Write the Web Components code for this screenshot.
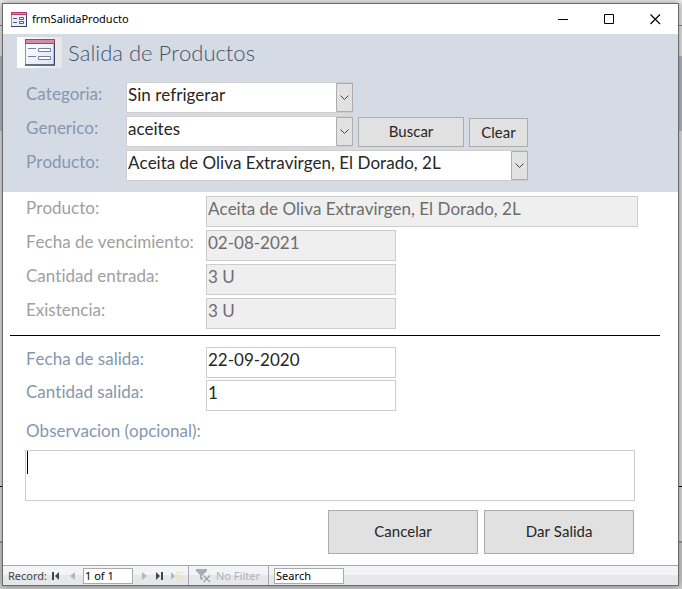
<!DOCTYPE html>
<html lang="es">
<head>
<meta charset="utf-8">
<title>frmSalidaProducto</title>
<style>
html{height:100%}
body{margin:0;min-height:100%;box-sizing:border-box;padding:3px 3px 3px 2px;display:flex;font-family:Lato,"Open Sans",sans-serif;font-variant-ligatures:none;font-kerning:none;
background:linear-gradient(#ededed 0 3px,#e4e4e4 3px 25px,#858585 25px 26px,#e4e4e4 26px 56px,#b0b8c2 56px 131px,#dedede 131px 486px,#000 486px 487px,#dedede 487px 541px,#9b9b9b 541px 543px,#cdcdcd 543px)}
access-window{flex:1}
</style>
</head>
<body>
<access-window caption="frmSalidaProducto">
  <form-header slot="content" heading="Salida de Productos">
    <combo-field label="Categoria:" value="Sin refrigerar"></combo-field>
    <combo-field label="Generico:" value="aceites">
      <push-button style="--w:106px">Buscar</push-button>
      <push-button style="--w:59px;--h:29px">Clear</push-button>
    </combo-field>
    <combo-field label="Producto:" value="Aceita de Oliva Extravirgen, El Dorado, 2L" style="--combo:402px"></combo-field>
  </form-header>
  <form-detail slot="content">
    <text-field slot="current" label="Producto:" value="Aceita de Oliva Extravirgen, El Dorado, 2L" disabled style="--field:432px"></text-field>
    <text-field slot="current" label="Fecha de vencimiento:" value="02-08-2021" disabled></text-field>
    <text-field slot="current" label="Cantidad entrada:" value="3 U" disabled></text-field>
    <text-field slot="current" label="Existencia:" value="3 U" disabled></text-field>
    <text-field slot="exit" label="Fecha de salida:" value="22-09-2020"></text-field>
    <text-field slot="exit" label="Cantidad salida:" value="1"></text-field>
    <note-field slot="note" label="Observacion (opcional):"></note-field>
    <push-button slot="actions" style="--w:150px;--h:44px">Cancelar</push-button>
    <push-button slot="actions" style="--w:150px;--h:44px">Dar Salida</push-button>
  </form-detail>
  <record-bar slot="status"></record-bar>
</access-window>
<script>
function define(name, render) {
  customElements.define(name, class extends HTMLElement {
    connectedCallback() {
      if (this.shadowRoot) return;
      this.attachShadow({mode: 'open'}).innerHTML =
        '<style>*{box-sizing:border-box}button,input,select,textarea{font-kerning:none!important;font-variant-ligatures:none!important}</style>' + render(this);
    }
  });
}
const at = (el, n) => el.getAttribute(n) || '';

define('form-icon', () => `
<style>:host{display:block;width:30px;height:27px}svg{display:block;width:100%;height:100%}</style>
<svg viewBox="0 0 30 27" aria-hidden="true"><defs><linearGradient id="g" x2="1" y2="1"><stop stop-color="#fff"/><stop offset="1" stop-color="#dce3f0"/></linearGradient></defs>
<path d="M0 4h30v22H0z" fill="url(#g)"/><path d="M.5 4v22" stroke="#8593ad"/><path d="M0 26h30M29.500 4v22" stroke="#344563" stroke-width="1.500"/>
<path d="M0 0h30v5H0z" fill="#b23b6b"/><path d="M1 1h28v3H1z" fill="#d58bac"/>
<path d="M3 9.500h8M3 17.500h8" stroke="#71809b"/><path d="M13.500 9.500h12v3h-12zM13.500 17.500h12v3h-12z" fill="#fff" stroke="#71809b"/></svg>`);

define('small-form-icon', () => `
<style>:host{display:block;width:16px;height:15px}svg{display:block}</style>
<svg width="16" height="15" aria-hidden="true"><path d="M0 0h16v15H0z" fill="#eaf0fa"/><path d="M.5 3v12" stroke="#8593ad"/><path d="M0 14.500h16M15.500 3v12" stroke="#344563"/>
<path d="M0 0h16v3H0z" fill="#b23b6b"/><path d="M1 1h14v1H1z" fill="#d58bac"/>
<path d="M2 6.500h4M2 10.500h4" stroke="#4d5f80"/><path d="M8.500 5.500h4v2h-4zM8.500 9.500h4v2h-4z" fill="#fff" stroke="#4d5f80"/></svg>`);

define('access-window', el => `
<style>
:host{display:flex;flex-direction:column;background:#fff;border:1px solid #6b6b6b;box-shadow:0 0 7px #0006;min-width:0}
header{display:flex;align-items:center;height:30px;padding-left:8px;font:11px/16px "Noto Sans",sans-serif;color:#000}
small-form-icon{margin-right:5px}
.caption{flex:1}
button{width:46px;height:30px;padding:0;border:0;background:none;display:grid;place-items:center}
main{flex:1;display:flex;flex-direction:column}
</style>
<header><small-form-icon></small-form-icon><span class="caption">${at(el, 'caption')}</span>
<button aria-label="Minimizar"><svg width="11" height="11"><path d="M0 5.500h10" stroke="#000"/></svg></button>
<button aria-label="Maximizar"><svg width="11" height="11"><path d="M.5.5h9v9h-9z" stroke="#000" fill="none"/></svg></button>
<button aria-label="Cerrar"><svg width="11" height="11"><path d="M.5.5l9.500 9.500M10 .5L.5 10" stroke="#000" stroke-width="1.200"/></svg></button></header>
<main><slot name="content"></slot></main><slot name="status"></slot>`);

define('form-header', el => `
<style>
:host{display:block;background:#d5dbe5;padding:3px 23px 11px;color:#8497b0}
.title{display:flex;align-items:center;gap:6px;margin:0 0 14px -9px}
.logo{display:grid;place-items:center;width:45px;height:31px;background:linear-gradient(90deg,#fff,#e6e6e6)}
h1{margin:0;font-size:22px;line-height:31px;font-weight:300;color:#44546a}
.rows{display:flex;flex-direction:column;gap:3px}
</style>
<div class="title"><span class="logo"><form-icon></form-icon></span><h1>${at(el, 'heading')}</h1></div>
<div class="rows"><slot></slot></div>`);

define('combo-field', el => `
<style>
:host{display:flex;align-items:center;gap:5px;font-size:17px}
label{width:95px;line-height:20px;padding-bottom:8px}
.box{display:grid;flex:0 1 var(--combo,227px)}
select,svg{grid-area:1/1}
select{appearance:none;width:100%;height:31px;border:1px solid #cfcdcd;border-radius:0;background:#fff;margin:0;padding:0 18px 7px 1px;font:inherit;color:#262626}
svg{justify-self:end;align-self:center;pointer-events:none}
::slotted(push-button){align-self:end}
</style>
<label for="c">${at(el, 'label')}</label>
<span class="box"><select id="c"><option>${at(el, 'value')}</option></select>
<svg width="17" height="29"><path d="M.5.5h16v28H.5z" fill="#e1e1e1" stroke="#adadad"/><path d="M4.500 12.500l4 4 4-4" fill="none" stroke="#444"/></svg></span>
<slot></slot>`);

define('push-button', () => `
<style>
:host{display:block}
button{width:var(--w);height:var(--h,30px);padding:0 0 2px;border:1px solid #adadad;background:#e1e1e1;color:#262626;font:15px/18px Lato,"Open Sans",sans-serif;display:block}
</style>
<button type="button"><slot></slot></button>`);

define('text-field', el => `
<style>
:host{display:flex;align-items:center;font-size:17px;color:#8497b0}
:host([disabled]){color:#a0a0a0}
label{width:180px;line-height:20px;padding-bottom:8px}
input{flex:0 1 var(--field,190px);min-width:0;height:31px;border:1px solid #cdcdcd;background:#fff;margin:0;padding:0 1px 7px;font:inherit;color:#262626}
input:disabled{background:#efefef;color:#6d6d6d}
</style>
<label for="t">${at(el, 'label')}</label><input id="t" value="${at(el, 'value')}" ${el.hasAttribute('disabled') ? 'disabled' : ''}>`);

define('note-field', el => `
<style>
:host{display:block;color:#8497b0;font-size:17px}
label{display:block;line-height:20px;margin-bottom:9px}
.box{position:relative;margin-left:-1px}
textarea{display:block;width:100%;height:51px;resize:none;border:1px solid #cdcdcd;margin:0;padding:1px 2px;font:inherit;color:#262626;outline:0}
.caret{position:absolute;left:2px;top:1px;width:1px;height:23px;background:#000}
</style>
<label for="n">${at(el, 'label')}</label><div class="box"><textarea id="n"></textarea><span class="caret"></span></div>`);

define('form-detail', () => `
<style>
:host{display:block;padding:4px 18px 11px 7px}
section{display:flex;flex-direction:column;gap:3px;padding:0 21px 0 16px}
hr{height:1px;border:0;background:#000;margin:6px 0 11px}
.exit{gap:2px}
.note{padding-right:25px;margin-top:10px}
.actions{flex-direction:row;justify-content:flex-end;gap:6px;padding-right:26px;margin-top:9px}
</style>
<section><slot name="current"></slot></section><hr>
<section class="exit"><slot name="exit"></slot></section>
<section class="note"><slot name="note"></slot></section>
<section class="actions"><slot name="actions"></slot></section>`);

define('record-bar', () => `
<style>
:host{display:flex;align-items:center;height:20px;border-top:1px solid #a5a7b2;background:linear-gradient(#f3f4f7 50%,#e5e7ea 50%);font:11px/14px "Noto Sans",sans-serif;color:#444;padding-left:5px;box-sizing:border-box}
button{border:0;background:none;padding:0;margin:0;height:18px;display:flex;align-items:center;font:inherit;color:inherit}
button:disabled{color:#b1b1b5}
input{height:16px;border:1px solid #ababab;padding:0 1px;margin:0;background:#fff;font:inherit;color:#000;min-width:0}
.nav{width:22px;justify-content:center}
.edge{width:10px}
.pos{width:50px}.find{width:70px}
i{width:1px;height:19px;background:#a5a7b2}
.new{width:23px}
.filter{gap:4px;padding:0 8px 0 7px}
.find{margin-left:5px}
label{width:43px}
</style>
<label for="p">Record:</label>
<button class="nav edge" aria-label="Primero"><svg width="8" height="8"><path d="M0 0h2v8H0zM7 0v8L3 4z" fill="#444"/></svg></button>
<button class="nav" disabled aria-label="Anterior"><svg width="5" height="8"><path d="M5 0v8L0 4z" fill="#b8b8bc"/></svg></button>
<input class="pos" id="p" value="1 of 1">
<button class="nav" disabled aria-label="Siguiente"><svg width="5" height="8"><path d="M0 0v8l5-4z" fill="#b8b8bc"/></svg></button>
<button class="nav edge" aria-label="Último"><svg width="8" height="8"><path d="M5 0h2v8H5zM0 0v8l4-4z" fill="#444"/></svg></button>
<button class="nav new" disabled aria-label="Nuevo"><svg width="14" height="10"><path d="M1 1v8l4-4z" fill="#b8b8bc"/><path d="M6 1.500h7M6 8.500h7M6.500 1v8M12.500 1v8M9.500 0v10M5 5h9" stroke="#eddfae" stroke-dasharray="2 1"/></svg></button>
<i></i>
<button class="filter" disabled><svg width="16" height="15"><path d="M0 1h11v2L7 7v6l-3-2V7L0 3z" fill="#adadb1"/><path d="M7 7l7 7M14 7l-7 7" stroke="#eceef0" stroke-width="4"/><path d="M7.500 7.500l6.500 6.500M14 7.500L7.500 14" stroke="#a0a0a4" stroke-width="1.500"/></svg>No Filter</button>
<i></i>
<input class="find" aria-label="Search" value="Search">`);
</script>
</body>
</html>
